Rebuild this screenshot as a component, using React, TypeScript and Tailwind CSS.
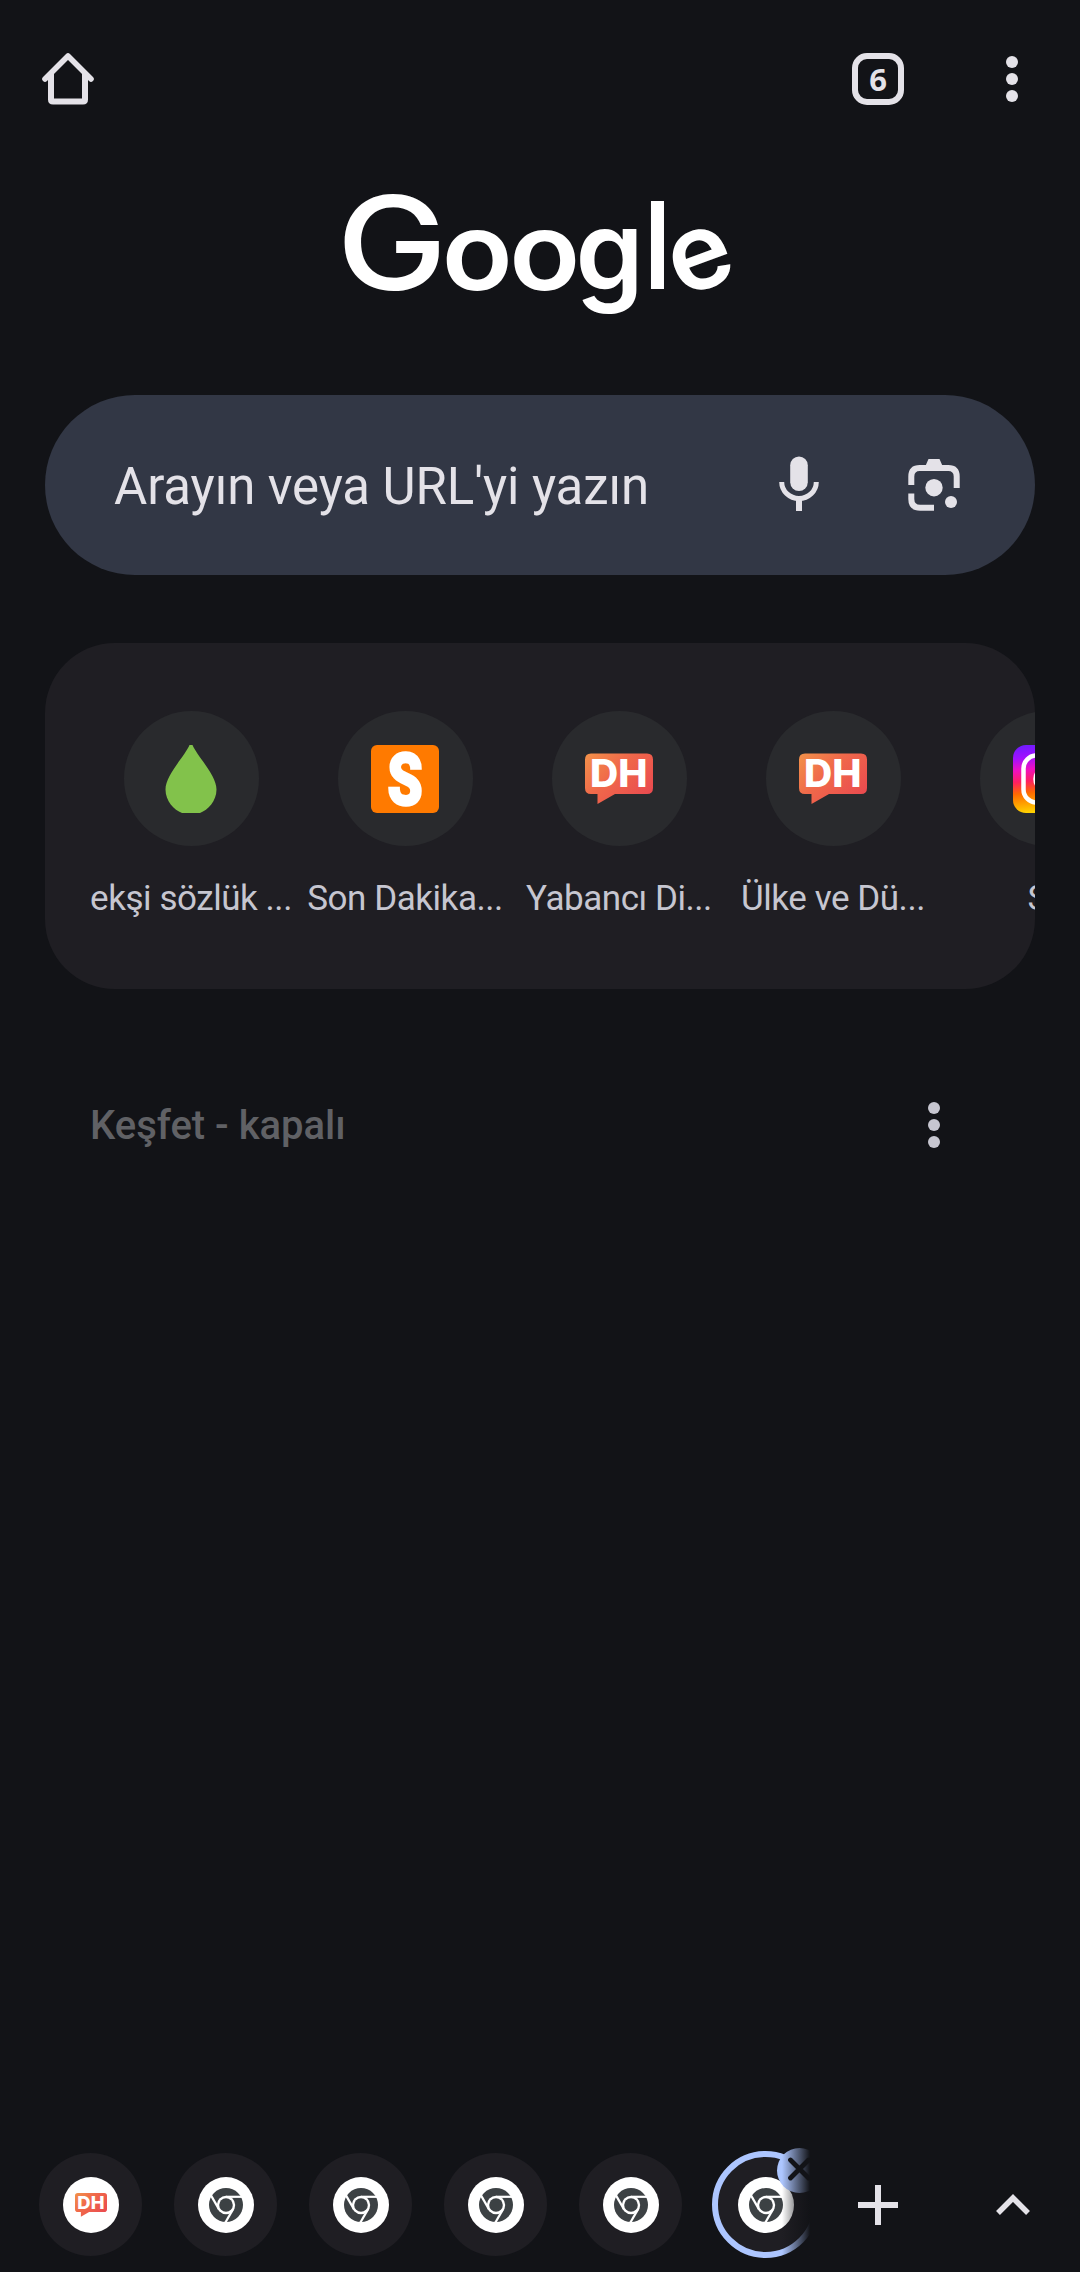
import React, { HTMLAttributes } from 'react';
import clsx from 'clsx';

interface IShortcut {
  title: string;
  icon: React.ComponentType;
}

const HomeIcon = () => (
  <svg width="72" height="72" viewBox="0 0 72 72" fill="none" aria-hidden="true">
    <path
      d="M13 36 36 13 59 36"
      stroke="#e4e2e8"
      strokeWidth="5.6"
      strokeLinecap="round"
      strokeLinejoin="round"
    />
    <path
      d="M19 31V56.500Q19 58.500 21 58.500H51Q53 58.500 53 56.500V31"
      stroke="#e4e2e8"
      strokeWidth="6"
    />
  </svg>
);

const DotsIcon = ({ className = '' }: { className?: string }) => (
  <svg
    width="12"
    height="46"
    viewBox="0 0 12 46"
    fill="currentColor"
    className={className}
    aria-hidden="true"
  >
    <circle cx="6" cy="6" r="6" />
    <circle cx="6" cy="23" r="6" />
    <circle cx="6" cy="40" r="6" />
  </svg>
);

const MicIcon = () => (
  <svg width="72" height="72" viewBox="0 0 72 72" fill="none" aria-hidden="true">
    <rect x="27.200" y="7.500" width="17.600" height="34.500" rx="8.800" fill="#e4e2e8" />
    <path d="M18.700 33a17.300 16.500 0 0 0 34.600 0" stroke="#e4e2e8" strokeWidth="5" />
    <path d="M36 50v12" stroke="#e4e2e8" strokeWidth="6" />
  </svg>
);

const LensIcon = () => (
  <svg width="72" height="72" viewBox="0 0 72 72" fill="none" aria-hidden="true">
    <g stroke="#e4e2e8" strokeWidth="6">
      <path d="M13.300 36v-8.500q0-8.500 8.500-8.500h28.400q8.500 0 8.500 8.500V39" />
      <path d="M13.300 44.500v5.500q0 8.800 8.800 8.800H36" />
    </g>
    <path d="M27 18 30.500 10h11l3.500 8z" fill="#e4e2e8" />
    <circle cx="36" cy="38.700" r="8.700" fill="#e4e2e8" />
    <circle cx="53" cy="53" r="6" fill="#e4e2e8" />
  </svg>
);

const DropIcon = () => (
  <svg width="68" height="68" viewBox="0 0 68 68" aria-hidden="true">
    <path
      d="M32.500 0h3C40 11 59.500 30 59.500 44.500 59.500 56 51 65 43 68H25C17 65 8.500 56 8.500 44.500 8.500 30 28 11 32.500 0z"
      fill="#82c24b"
    />
  </svg>
);

const SIcon = () => (
  <svg width="68" height="68" viewBox="0 0 68 68">
    <rect width="68" height="68" rx="6" fill="#ff7a00" />
    <text
      transform="translate(34 59.500) scale(0.780 1)"
      textAnchor="middle"
      className="font-[Roboto] text-[72px] font-black"
      fill="#fff"
      stroke="#fff"
      strokeWidth="2.500"
    >
      S
    </text>
  </svg>
);

const DHIcon = ({ size = 68 }: { size?: number }) => (
  <svg width={size} height={size} viewBox="0 0 68 68">
    <defs>
      <linearGradient id="dh" x1="0" y1="0" x2="1" y2="0.700">
        <stop offset="0" stopColor="#f2924a" />
        <stop offset="0.450" stopColor="#f0694a" />
        <stop offset="1" stopColor="#ea4c4f" />
      </linearGradient>
    </defs>
    <path
      d="M6 8.500h56q6 0 6 6v28.500q0 6-6 6H30L12.500 59V49H6q-6 0-6-6V14.500q0-6 6-6z"
      fill="url(#dh)"
    />
    <text
      x="5"
      y="42.300"
      textLength="57.500"
      lengthAdjust="spacingAndGlyphs"
      className="font-[Inter] text-[38px] font-extrabold"
      fill="#fff"
    >
      DH
    </text>
  </svg>
);

const InstagramIcon = () => (
  <svg width="68" height="68" viewBox="0 0 68 68" fill="none" aria-hidden="true">
    <defs>
      <linearGradient id="ig" x1="0" y1="0" x2="0.120" y2="1">
        <stop offset="0" stopColor="#6a1cff" />
        <stop offset="0.200" stopColor="#a010ff" />
        <stop offset="0.380" stopColor="#f010c0" />
        <stop offset="0.550" stopColor="#ff2060" />
        <stop offset="0.720" stopColor="#ff6a00" />
        <stop offset="1" stopColor="#ffd000" />
      </linearGradient>
    </defs>
    <rect width="68" height="68" rx="13" fill="url(#ig)" />
    <rect x="10.500" y="10.500" width="47" height="47" rx="13" stroke="#fff" strokeWidth="4.500" />
    <circle cx="34" cy="34" r="11.500" stroke="#fff" strokeWidth="4.500" />
  </svg>
);

const ChromeIcon = () => (
  <svg width="34" height="34" viewBox="-17 -17 34 34" aria-hidden="true">
    <circle r="17" fill="#3c4144" />
    <circle r="9.200" fill="#fff" />
    <g stroke="#fff" strokeWidth="2.200">
      <path d="M0-8.200h17" />
      <path d="M0-8.200h17" transform="rotate(120)" />
      <path d="M0-8.200h17" transform="rotate(240)" />
    </g>
    <circle r="6.800" fill="#3c4144" />
  </svg>
);

const shortcuts: IShortcut[] = [
  { title: 'ekşi sözlük ...', icon: DropIcon },
  { title: 'Son Dakika...', icon: SIcon },
  { title: 'Yabancı Di...', icon: DHIcon },
  { title: 'Ülke ve Dü...', icon: DHIcon },
  { title: 'Su', icon: InstagramIcon },
];

const Logo = () => (
  <svg
    width="400"
    height="180"
    viewBox="340 165 400 180"
    className="overflow-visible font-[Inter] font-semibold"
    fill="#fff"
    textAnchor="middle"
  >
    <text transform="translate(392 289.500) scale(1.140 1)" fontSize="130" fontWeight="500">
      G
    </text>
    <text transform="translate(477.300 289.500) scale(1.070 1)" fontSize="109">
      o
    </text>
    <text transform="translate(544.700 289.500) scale(1.070 1)" fontSize="109">
      o
    </text>
    <text transform="translate(609.500 289.500) scale(1 1.020)" fontSize="109">
      g
    </text>
    <text x="657.500" y="289" fontSize="121" fontWeight="500">
      l
    </text>
    <text transform="translate(710.500 287) rotate(-20)" fontSize="107">
      e
    </text>
  </svg>
);

const Shortcut = ({ shortcut: { title, icon: Icon } }: { shortcut: IShortcut }) => (
  <div className="flex w-[214px] shrink-0 flex-col items-center">
    <div className="flex size-[135px] items-center justify-center rounded-full bg-[#292a2d]">
      <Icon />
    </div>
    <span className="mt-8 text-[35px] leading-[42px] tracking-[-0.450px] whitespace-nowrap text-[#c6c6d0]">
      {title}
    </span>
  </div>
);

interface TabBubbleProps extends HTMLAttributes<HTMLDivElement> {
  selected?: boolean;
}

const TabBubble = ({ selected, children }: TabBubbleProps) => (
  <div className="relative flex w-[135px] shrink-0 items-center justify-center">
    <div
      className={clsx(
        'flex items-center justify-center rounded-full bg-[#1f1e23]',
        selected ? 'size-[107px] border-6 border-[#adc6ff]' : 'size-[103px]',
      )}
    >
      <div className="flex size-14 items-center justify-center rounded-full bg-white">
        {children}
      </div>
    </div>
    {selected && (
      <div className="absolute top-[11px] left-[79px] size-[45px] rounded-full bg-[#adc6ff]">
        <svg width="45" height="45" viewBox="0 0 45 45" aria-hidden="true">
          <path
            d="M13.500 12l18 18M31.500 12l-18 18"
            stroke="#121317"
            strokeWidth="4.800"
            strokeLinecap="round"
          />
        </svg>
      </div>
    )}
  </div>
);

const App = () => (
  <div className="flex h-[2272px] w-[1080px] flex-col overflow-hidden bg-[#121317] font-[Roboto,sans-serif]">
    <header className="flex h-[158px] items-center pr-[62px] pl-8">
      <HomeIcon />
      <div className="ml-auto flex size-[52px] items-center justify-center rounded-[15px] border-6 border-[#e4e2e8] font-['Noto_Sans'] text-[31px] leading-none font-bold text-[#e4e2e8]">
        6
      </div>
      <DotsIcon className="ml-[102px] text-[#e4e2e8]" />
    </header>

    <div className="flex h-[237px] justify-center pt-[7px]">
      <Logo />
    </div>

    <div className="mx-[45px] flex h-[180px] items-center rounded-full bg-[#323745] pr-[65px] pl-[69px]">
      <span className="pt-1 text-[51px] tracking-[-0.100px] whitespace-nowrap text-[#e4e2e8]">
        Arayın veya URL'yi yazın
      </span>
      <div className="ml-auto flex gap-[63px]">
        <MicIcon />
        <LensIcon />
      </div>
    </div>

    <div className="mx-[45px] mt-[68px] flex h-[346px] overflow-hidden rounded-[70px] bg-[#1f1e23] pt-[68px] pl-[39px]">
      {shortcuts.map((shortcut, index) => (
        <Shortcut key={index} shortcut={shortcut} />
      ))}
    </div>

    <div className="mt-[96px] flex h-20 items-center justify-between pr-[140px] pl-[90px]">
      <span className="pt-0.5 text-[40px] font-medium text-[#606165]">Keşfet - kapalı</span>
      <DotsIcon className="text-[#c6c6d0]" />
    </div>

    <footer className="mt-auto flex h-[135px]">
      <div className="relative flex w-[810px] overflow-hidden pl-[23px]">
        <TabBubble>
          <DHIcon size={32} />
        </TabBubble>
        {[1, 2, 3, 4].map((tab) => (
          <TabBubble key={tab}>
            <ChromeIcon />
          </TabBubble>
        ))}
        <TabBubble selected>
          <ChromeIcon />
        </TabBubble>
        <div className="absolute inset-y-0 right-0 w-7 bg-gradient-to-r from-transparent to-[#121317]" />
      </div>
      <div className="flex w-[135px] items-center justify-center">
        <svg width="40" height="40" viewBox="0 0 40 40" aria-hidden="true">
          <path d="M20 0v40M0 20h40" stroke="#e4e2e8" strokeWidth="6" />
        </svg>
      </div>
      <div className="flex w-[135px] items-center justify-center">
        <svg width="36" height="24" viewBox="0 0 36 24" fill="none" aria-hidden="true">
          <path d="M3 20 18 5l15 15" stroke="#e4e2e8" strokeWidth="5.500" />
        </svg>
      </div>
    </footer>
  </div>
);

export default App;
